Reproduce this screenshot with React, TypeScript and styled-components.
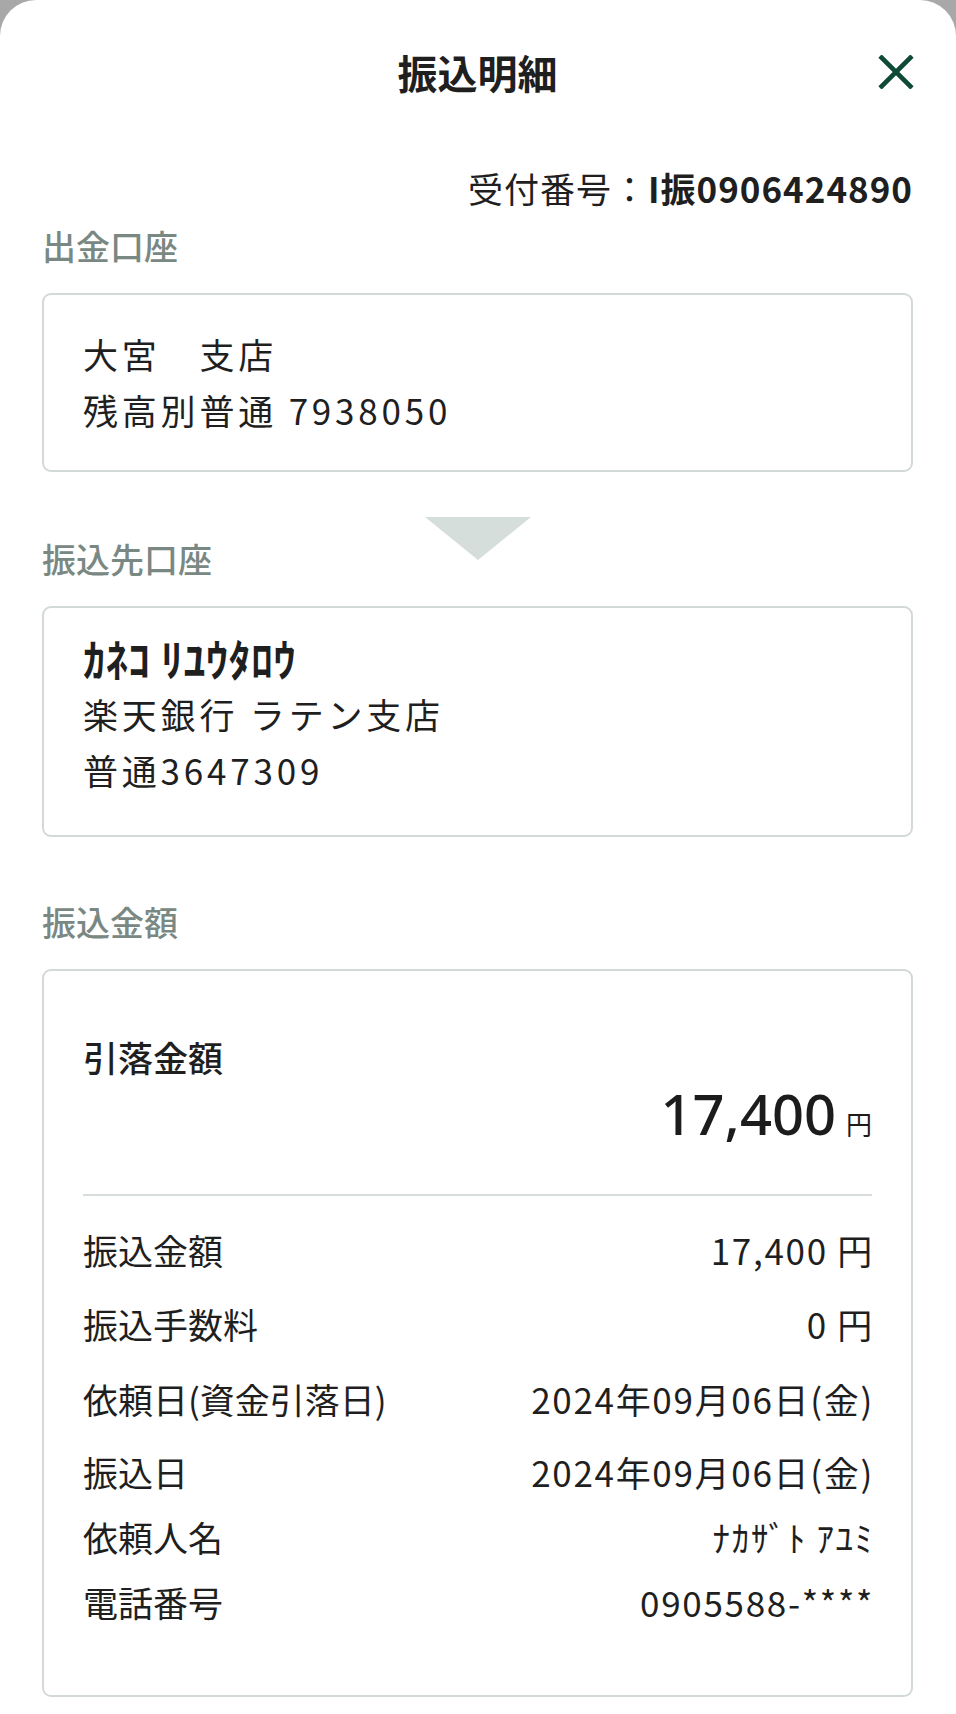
import styled, { createGlobalStyle } from "styled-components";

const GlobalStyle = createGlobalStyle`
    html, body {
        margin: 0;
        padding: 0;
        background-color: #A8A8A8;
    }
    body {
        font-family: "Noto Sans CJK JP", "Noto Sans", sans-serif;
        color: #1F1F1F;
    }
`;

const Sheet = styled.div`
    box-sizing: border-box;
    min-height: 1714px;
    background-color: #FFFFFF;
    border-radius: 36px 36px 0 0;
    padding: 0 43px 0 42px;
`;

const Header = styled.header`
    height: 144px;
    display: grid;
    grid-template-columns: 1fr auto 1fr;
    align-items: center;
`;

const Title = styled.h1`
    grid-column: 2;
    margin: 0;
    font-size: 40px;
    font-weight: 700;
    color: #1F1F1F;
    line-height: 1;
`;

const CloseButton = styled.button`
    grid-column: 3;
    justify-self: end;
    width: 40px;
    height: 40px;
    padding: 0;
    margin-right: -3px;
    border: none;
    background: transparent;
    display: flex;
    align-items: center;
    justify-content: center;
    cursor: pointer;
`;

const Receipt = styled.p`
    margin: 19px 0 8px 0;
    text-align: right;
    font-size: 35px;
    line-height: 50px;
    letter-spacing: 1px;
    color: #1F1F1F;

    b {
        font-weight: 700;
    }
`;

const SectionLabel = styled.h2`
    margin: 0;
    font-size: 34px;
    font-weight: 500;
    line-height: 50px;
    color: #7A8883;
`;

const Connector = styled.div`
    display: grid;
    grid-template-columns: 1fr auto 1fr;
    align-items: start;

    ${SectionLabel} {
        margin-top: 62px;
    }
`;

const Arrow = styled.div`
    grid-column: 2;
    margin-top: 45px;
    width: 0;
    height: 0;
    border-left: 53px solid transparent;
    border-right: 53px solid transparent;
    border-top: 43px solid #D6DEDC;
`;

const Card = styled.div<{ $pad?: string }>`
    margin-top: 22px;
    border: 2px solid #D3D9D7;
    border-radius: 9px;
    padding: ${(p) => p.$pad ?? "31px 39px 32px"};
`;

const Line = styled.div<{ $strong?: boolean }>`
    font-size: ${(p) => (p.$strong ? "44px" : "35px")};
    font-weight: ${(p) => (p.$strong ? 700 : 400)};
    letter-spacing: ${(p) => (p.$strong ? "0.5px" : "3.8px")};
    line-height: 56px;
    white-space: pre;
`;

const Spacer = styled.div<{ $h: number }>`
    height: ${(p) => p.$h}px;
`;

const TotalLabel = styled.div`
    font-size: 35px;
    font-weight: 500;
    line-height: 49px;
`;

const TotalAmount = styled.div`
    text-align: right;
    line-height: 64px;
    color: #1C1C1C;
`;

const BigNumber = styled.span`
    font-family: "Noto Sans", sans-serif;
    font-size: 56px;
    font-weight: 500;
`;

const Yen = styled.span`
    font-size: 26px;
    margin-left: 10px;
`;

const Divider = styled.hr`
    margin: 34px 0 0 0;
    border: none;
    height: 2px;
    background-color: #D6DCDA;
`;

const Row = styled.div<{ $space: number }>`
    display: flex;
    justify-content: space-between;
    align-items: baseline;
    margin-top: ${(p) => p.$space}px;
    font-size: 35px;
    line-height: 56px;
`;

const RowValue = styled.span`
    text-align: right;
    letter-spacing: 1.7px;
    margin-right: -2px;
`;

const CloseIcon = () => (
    <svg width="36" height="34" viewBox="0 0 36 34">
        <path d="M2 1 L34 33 M34 1 L2 33" stroke="#0E4A36" strokeWidth="4.6" fill="none" />
    </svg>
);

const details = [
    { label: "振込金額", value: "17,400 円", space: 26 },
    { label: "振込手数料", value: "0 円", space: 18 },
    { label: "依頼日(資金引落日)", value: "2024年09月06日(金)", space: 19 },
    { label: "振込日", value: "2024年09月06日(金)", space: 17 },
    { label: "依頼人名", value: "ﾅｶｻﾞﾄ ｱﾕﾐ", space: 9 },
    { label: "電話番号", value: "0905588-****", space: 9 },
];

export default function App() {
    return (
        <>
            <GlobalStyle />
            <Sheet>
                <Header>
                    <Title>振込明細</Title>
                    <CloseButton aria-label="閉じる">
                        <CloseIcon />
                    </CloseButton>
                </Header>

                <Receipt>
                    受付番号：<b>I振0906424890</b>
                </Receipt>

                <SectionLabel>出金口座</SectionLabel>
                <Card>
                    <Line>大宮　支店</Line>
                    <Line>残高別普通 7938050</Line>
                </Card>

                <Connector>
                    <SectionLabel>振込先口座</SectionLabel>
                    <Arrow />
                </Connector>
                <Card $pad="22px 39px 37px">
                    <Line $strong>ｶﾈｺ ﾘﾕｳﾀﾛｳ</Line>
                    <Line>楽天銀行 ラテン支店</Line>
                    <Line>普通3647309</Line>
                </Card>

                <Spacer $h={60} />
                <SectionLabel>振込金額</SectionLabel>
                <Card $pad="61px 39px 65px">
                    <TotalLabel>引落金額</TotalLabel>
                    <TotalAmount>
                        <BigNumber>17,400</BigNumber>
                        <Yen>円</Yen>
                    </TotalAmount>
                    <Divider />
                    {details.map((d) => (
                        <Row key={d.label} $space={d.space}>
                            <span>{d.label}</span>
                            <RowValue>{d.value}</RowValue>
                        </Row>
                    ))}
                </Card>
            </Sheet>
        </>
    );
}
